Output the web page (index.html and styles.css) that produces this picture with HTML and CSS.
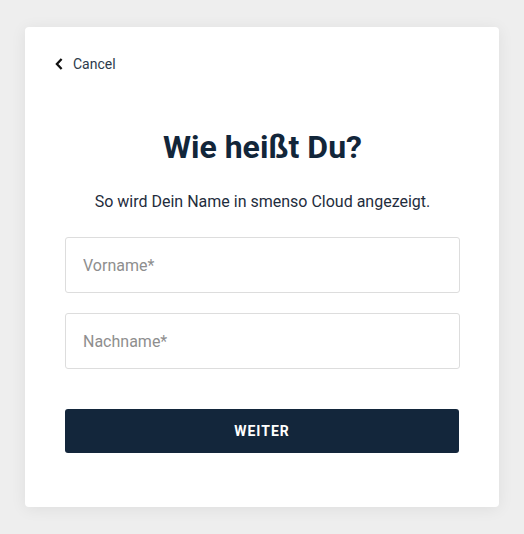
FILE: index.html
```html
<!DOCTYPE html>
<html lang="de">
<head>
<meta charset="utf-8">
<link rel="stylesheet" href="styles.css">
</head>
<body>
<div class="card">
  <a class="cancel" href="#">
    <svg class="chev" width="8" height="12" viewBox="0 0 8 12"><path d="M6.6 1 L1.9 6 L6.6 11" fill="none" stroke="#111" stroke-width="2.3"/></svg>
    <span>Cancel</span>
  </a>
  <h1 class="title">Wie heißt Du?</h1>
  <p class="sub">So wird Dein Name in smenso Cloud angezeigt.</p>
  <form class="form">
    <input class="field" type="text" placeholder="Vorname*">
    <input class="field" type="text" placeholder="Nachname*">
    <button class="btn" type="button">WEITER</button>
  </form>
</div>
</body>
</html>
```
FILE: styles.css
```css
* { box-sizing: border-box; }
html, body { margin: 0; padding: 0; }
body {
  background: #eeeeee;
  font-family: Roboto, "Liberation Sans", sans-serif;
  width: 524px;
  height: 534px;
  overflow: hidden;
}
.card {
  margin: 27px 0 0 25px;
  width: 474px;
  height: 480px;
  background: #fff;
  border-radius: 4px;
  box-shadow: 0 2px 16px rgba(0,0,0,0.07);
  padding: 29px 39px 0 40px;
  display: flex;
  flex-direction: column;
}
.cancel {
  display: flex;
  align-items: center;
  gap: 10px;
  margin-left: -10px;
  height: 16px;
  color: #2c3a4b;
  text-decoration: none;
  font-size: 14px;
}
.title {
  margin: 57px 0 0;
  text-align: center;
  font-size: 32px;
  font-weight: 700;
  color: #12263a;
  line-height: 36px;
}
.sub {
  margin: 27px 0 0;
  text-align: center;
  font-size: 16px;
  color: #1f2d3d;
  line-height: 20px;
}
.form {
  margin-top: 25px;
  display: flex;
  flex-direction: column;
}
.field {
  height: 56px;
  border: 1px solid #dddddd;
  border-radius: 3px;
  padding: 0 17px;
  font-family: inherit;
  font-size: 16px;
  color: #222;
  outline: none;
  margin-bottom: 20px;
}
.field::placeholder { color: #8e8e8e; }
.btn {
  margin-top: 20px;
  height: 44px;
  width: 394px;
  border: none;
  border-radius: 3px;
  background: #13263b;
  color: #fff;
  font-family: inherit;
  font-weight: 700;
  font-size: 14px;
  letter-spacing: 1px;
}
```
